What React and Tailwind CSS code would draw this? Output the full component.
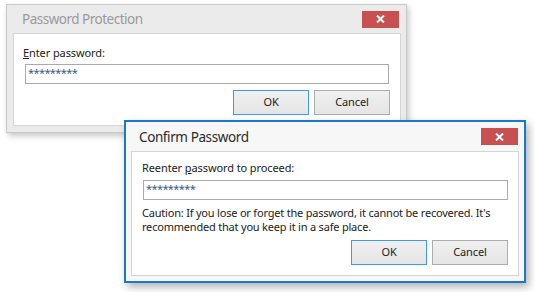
const font = { fontFamily: '"Noto Sans", "Open Sans", sans-serif' }

function CloseButton() {
  return (
    <div className="w-[37px] h-[17px] bg-[#c75050] flex items-center justify-center">
      <svg width="9" height="8" viewBox="0 0 9 8">
        <path d="M1 0.5 L8 7.5 M8 0.5 L1 7.5" stroke="#fff" strokeWidth="2" />
      </svg>
    </div>
  )
}

function DlgButton({ children, primary }) {
  return (
    <div
      className={
        'w-[76px] h-[25px] flex items-center justify-center text-[11px] tracking-[-0.1px] text-[#222] bg-gradient-to-b from-[#f0f0f0] to-[#e5e5e5] border ' +
        (primary ? 'border-[#3c9cf0]' : 'border-[#acacac]')
      }
    >
      {children}
    </div>
  )
}

function PasswordBox() {
  return (
    <div className="h-[20px] border border-[#ababab] bg-white flex items-center pl-[2px]">
      <span className="text-[11px] leading-none tracking-[-0.6px] text-[#3a5b82] -mt-[3px]">*********</span>
    </div>
  )
}

export default function App() {
  return (
    <div className="relative w-[535px] h-[292px] bg-white overflow-hidden" style={font}>
      {/* inactive dialog */}
      <div className="absolute left-[6px] top-[4px] w-[401px] h-[129px] border border-[#c9c9c9] bg-[#ebebeb] shadow-[2px_3px_6px_rgba(0,0,0,0.22)] flex flex-col">
        <div className="h-[28px] flex items-center justify-between pl-[15px] pr-[7px]">
          <span className="text-[13.5px] tracking-[-0.5px] text-[#9a9a9a] mt-[1px]">Password Protection</span>
          <CloseButton />
        </div>
        <div className="ml-[6px] mr-[5px] h-[93px] bg-white border border-[#d5d5d5] pl-[9px] pr-[10px] pt-[11px]">
          <div className="text-[11px] leading-[16px] tracking-[-0.1px] text-[#222]">
            <span className="underline">E</span>nter password:
          </div>
          <div className="mt-[3px] ml-[2px] mr-[1px]">
            <PasswordBox />
          </div>
          <div className="mt-[6px] flex justify-end gap-[5px]">
            <DlgButton primary>OK</DlgButton>
            <DlgButton>Cancel</DlgButton>
          </div>
        </div>
      </div>

      {/* active dialog */}
      <div className="absolute left-[124px] top-[120px] w-[402px] h-[163px] border-2 border-[#1979ca] bg-[#f7f7f7] shadow-[3px_4px_8px_rgba(0,0,0,0.3)] flex flex-col">
        <div className="h-[29px] flex items-center justify-between pl-[13px] pr-[6px]">
          <span className="text-[13.5px] tracking-[-0.4px] text-[#2b2b2b] mt-[1px]">Confirm Password</span>
          <CloseButton />
        </div>
        <div className="mx-[5px] h-[125px] bg-white border border-[#d5d5d5] pl-[10px] pr-[10px] pt-[8px]">
          <div className="text-[11px] leading-[16px] tracking-[-0.1px] text-[#222]">
            Reenter <span className="underline">p</span>assword to proceed:
          </div>
          <div className="mt-[4px] ml-[1px]">
            <PasswordBox />
          </div>
          <div className="mt-[6px] text-[11px] leading-[14px] tracking-[-0.2px] text-[#222] whitespace-nowrap">
            Caution: If you lose or forget the password, it cannot be recovered. It's
            <br />
            recommended that you keep it in a safe place.
          </div>
          <div className="mt-[6px] flex justify-end gap-[5px]">
            <DlgButton primary>OK</DlgButton>
            <DlgButton>Cancel</DlgButton>
          </div>
        </div>
      </div>
    </div>
  )
}
